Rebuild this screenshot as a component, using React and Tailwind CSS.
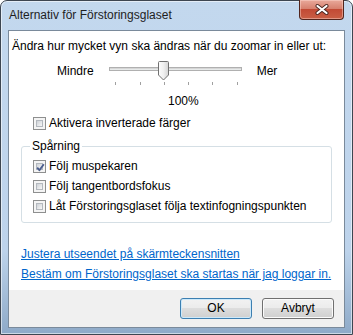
import React from 'react';

const ticks = [6, 31, 55, 79, 103, 128];

// Windows 7 style check box
const CheckBox = ({ checked }) => (
  <span className="relative flex h-[13px] w-[13px] shrink-0 border border-[#8e8f8f] bg-[#f4f4f4] p-[2px]">
    <span className="h-full w-full border border-[#b3b8be] bg-[linear-gradient(135deg,#cdd1d6,#f8f8f8)]" />
    {checked && (
      <svg className="absolute left-[1px] top-[1px]" width="11" height="11" viewBox="0 0 11 11">
        <path d="M2.2 5.6 L4.4 8.2 L8.8 2.2" fill="none" stroke="#4a5d8e" strokeWidth="1.9" strokeLinejoin="round" />
      </svg>
    )}
  </span>
);

const CheckRow = ({ checked, children }) => (
  <div className="flex h-[15px] items-center gap-[3px]">
    <CheckBox checked={checked} />
    <span className="leading-[15px]">{children}</span>
  </div>
);

const Button = ({ primary, children }) => (
  <button
    className={`flex h-[21px] w-[72px] items-center justify-center rounded-[3px] border bg-[linear-gradient(180deg,#f2f2f2_0%,#ebebeb_50%,#dddddd_50%,#cfcfcf_100%)] leading-[15px] text-black ${
      primary
        ? 'border-[#3c7fb1] shadow-[inset_0_0_0_1px_#cde9fa]'
        : 'border-[#707070] shadow-[inset_0_0_0_1px_#fbfbfb]'
    }`}
  >
    {children}
  </button>
);

const Slider = () => (
  <div className="relative h-[26px] w-[133px]">
    <div className="absolute left-0 right-0 top-[7px] h-[4px] border border-[#b0b0b0] bg-[#e7eaea] shadow-[inset_0_1px_0_#d6d6d6]" />
    {ticks.map((t) => (
      <span key={t} className="absolute top-[22px] h-[3px] w-[1px] bg-[#a0a0a0]" style={{ left: t }} />
    ))}
    <svg className="absolute left-[49px] top-[1px]" width="11" height="20" viewBox="0 0 11 20">
      <defs>
        <linearGradient id="thumb" x1="0" y1="0" x2="1" y2="0">
          <stop offset="0" stopColor="#fdfdfd" />
          <stop offset="0.5" stopColor="#f0f0f0" />
          <stop offset="1" stopColor="#d4d4d4" />
        </linearGradient>
      </defs>
      <path
        d="M1.5 0.5 H9.5 Q10.5 0.5 10.5 1.5 V14 L5.5 19 L0.5 14 V1.5 Q0.5 0.5 1.5 0.5 Z"
        fill="url(#thumb)"
        stroke="#707070"
      />
    </svg>
  </div>
);

export default function App() {
  return (
    <div className="flex h-[335px] w-[353px] flex-col rounded-t-[7px] border border-[#3d4651] bg-[linear-gradient(180deg,#c3d8ee_0%,#bdd3eb_75%,#8eaac8_100%)] px-[7px] pb-[6px] font-['Liberation_Sans',Arial,sans-serif] text-[12px] text-black shadow-[inset_0_0_0_1px_rgba(255,255,255,0.55)]">
      {/* title bar */}
      <div className="flex h-[29px] shrink-0 items-start justify-between px-[1px]">
        <span className="mt-[7px] leading-[15px] text-[#1e1e1e]">Alternativ för Förstoringsglaset</span>
        <div className="-mt-[1px] flex h-[20px] w-[45px] items-center justify-center rounded-b-[4px] border border-t-0 border-[#52251d] bg-[linear-gradient(180deg,#e9a99b_0%,#d7816f_45%,#c24a35_50%,#c95f45_100%)] shadow-[inset_0_0_0_1px_rgba(255,220,210,0.45)]">
          <svg width="14" height="11" viewBox="0 0 14 11">
            <path d="M2.5 2 L11.5 9 M11.5 2 L2.5 9" stroke="#4a2620" strokeWidth="4" strokeLinecap="round" />
            <path d="M2.5 2 L11.5 9 M11.5 2 L2.5 9" stroke="#ffffff" strokeWidth="2.2" strokeLinecap="round" />
          </svg>
        </div>
      </div>

      {/* client area */}
      <div className="flex h-[298px] shrink-0 flex-col border border-[#7a8a9b] bg-white">
        <div className="flex flex-1 flex-col pl-[3px] pt-[8px]">
          <p className="whitespace-nowrap leading-[15px]">Ändra hur mycket vyn ska ändras när du zoomar in eller ut:</p>

          <div className="ml-[45px] mt-[6px] flex items-start gap-[15px]">
            <span className="mt-[4px] leading-[15px]">Mindre</span>
            <Slider />
            <span className="mt-[4px] leading-[15px]">Mer</span>
          </div>

          <p className="ml-[156px] mt-[8px] leading-[15px]">100%</p>

          <div className="ml-[21px] mt-[7px]">
            <CheckRow>Aktivera inverterade färger</CheckRow>
          </div>

          <fieldset className="ml-[9px] mr-[12px] mt-[8px] rounded-[3px] border border-[#d5dfe5] pb-[8px] pl-[11px]">
            <legend className="-ml-[3px] px-[2px] leading-[15px]">Spårning</legend>
            <div className="mt-[5px] flex flex-col gap-[5px]">
              <CheckRow checked>Följ muspekaren</CheckRow>
              <CheckRow>Följ tangentbordsfokus</CheckRow>
              <CheckRow>Låt Förstoringsglaset följa textinfogningspunkten</CheckRow>
            </div>
          </fieldset>

          <div className="ml-[9px] mt-[24px] flex flex-col items-start gap-[5px] leading-[15px] text-[#0066cc]">
            <a className="underline">Justera utseendet på skärmteckensnitten</a>
            <a className="underline">Bestäm om Förstoringsglaset ska startas när jag loggar in.</a>
          </div>
        </div>

        <div className="flex h-[37px] shrink-0 items-center justify-end gap-[10px] bg-[#f0f0f0] pr-[10px]">
          <Button primary>OK</Button>
          <Button>Avbryt</Button>
        </div>
      </div>
    </div>
  );
}
